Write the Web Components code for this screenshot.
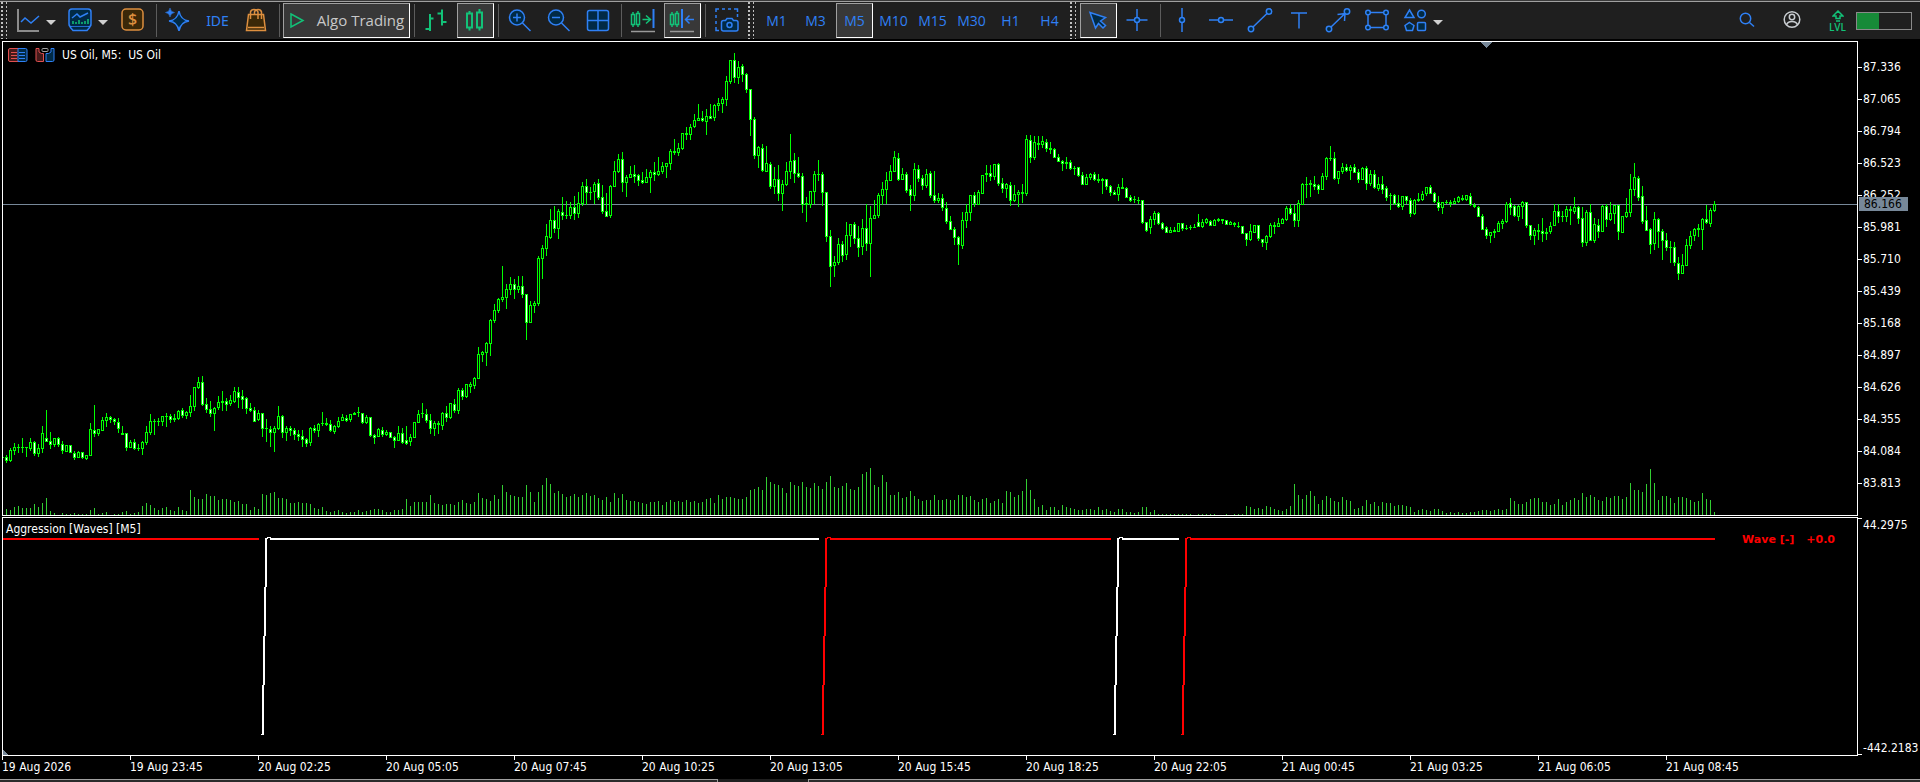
<!DOCTYPE html>
<html lang="en">
<head>
<meta charset="utf-8">
<title>US Oil, M5</title>
<style>
    html, body {
        height: 100%;
        margin: 0;
    }

    body {
        background: #000;
        color: #fff;
        font-family: "DejaVu Sans Condensed", "DejaVu Sans", sans-serif;
        font-size: 12px;
        overflow: hidden;
    }
</style>
</head>
<body>
<trading-terminal></trading-terminal>

<script>
(function (){
    const BLUE = "#2f80f5";
    const GREEN = "#12c278";
    const ORANGE = "#dd8f3f";
    const NAVY = "#012a45";

    // All icons are drawn in a 24x24 box
    const icons = {
        line: `<path d="M2 1V23H23" stroke="#8c8c8c" stroke-width="2"/><path d="M5 14L9 10L15 15L23 8"/>`,
        indicators: `<rect x="1" y="1" width="22" height="18" rx="3" fill="${NAVY}"/><path d="M2 19L5 22.500H19L22 19" fill="${NAVY}"/><path d="M4 10L9 6L12 9L20 5"/><path d="M5 13V16M8 14V16M11 12V16M14 14V16M17 13V16M20 11V16" stroke="${GREEN}"/>`,
        dollar: `<rect x="1" y="1" width="21" height="21" rx="4" fill="#3b2808" stroke="${ORANGE}"/><text x="11.500" y="17" fill="${ORANGE}" stroke="none" font-family="Open Sans" font-size="16" font-weight="600" text-anchor="middle">$</text>`,
        sparkle: `<path d="M13 3Q14.500 12 23 13Q14.500 14 13 23Q11.500 14 3 13Q11.500 12 13 3Z" fill="${NAVY}"/><path d="M4 0Q4.500 4 8.500 4.500Q4.500 5 4 9Q3.500 5 -.5 4.500Q3.500 4 4 0Z" fill="${BLUE}" stroke-width=".5"/>`,
        bag: `<path d="M4.500 6.500H19.500L21.500 22.500H2.500Z" fill="#3b2808" stroke="${ORANGE}"/><path d="M6.500 11V4Q7 1.500 10 1.500Q13 1.500 14 4V11M10.500 6V4Q11 1.500 14 1.500Q17 1.500 17.500 4V11M4 19.500H20" stroke="${ORANGE}"/>`,
        play: `<path d="M6 6L18 12.500L6 19Z" stroke="${GREEN}"/>`,
        bars: `<path d="M6 6V23M1.500 21H6M6 10.500H9.500M18 1.500V17.500M13.500 5.500H18M18 14H22.500" stroke="${GREEN}" stroke-width="2"/>`,
        candles: `<path d="M4 5.500H9V19.500H4ZM6.500 3V5.500M6.500 19.500V22.500M14 4.500H19V19.500H14ZM16.500 1V4.500M16.500 19.500V22.500" stroke="${GREEN}" stroke-width="2"/>`,
        zoomIn: `<circle cx="9" cy="9.500" r="7.500" fill="${NAVY}"/><path d="M14.500 15L22.500 23M9 5.500V13.500M5 9.500H13"/>`,
        zoomOut: `<circle cx="9" cy="9.500" r="7.500" fill="${NAVY}"/><path d="M14.500 15L22.500 23M5 9.500H13"/>`,
        grid: `<rect x="1.500" y="2.500" width="21" height="20" rx="2" fill="${NAVY}"/><path d="M12 2.500V22.500M1.500 12.500H22.500"/>`,
        scroll: `<path d="M.5 6.500H3.500V16.500H.5ZM2 4V6.500M2 16.500V19M5.500 5.500H8.500V16.500H5.500ZM7 3V5.500M7 16.500V19M11.500 11.500H19M15 7.500L19.500 11.500L15 15.500" stroke="${GREEN}"/><path d="M22.500 1V20" stroke-width="2"/><path d="M0 23.500H24" stroke="#9a9a9a"/>`,
        shift: `<path d="M.5 6.500H3.500V16.500H.5ZM2 4V6.500M2 16.500V19M5.500 5.500H8.500V16.500H5.500ZM7 3V5.500M7 16.500V19" stroke="${GREEN}"/><path d="M12 1V20" stroke-width="2"/><path d="M24 11.500H16M19.500 7.500L15.500 11.500L19.500 15.500"/><path d="M0 23.500H24" stroke="#9a9a9a"/>`,
        camera: `<path d="M1 4V1H4M7 1H10M13 1H16M19 1H22.500V4M22.500 6V9M1 7V10M1 13V16M1 19V22.500H4"/><path d="M6.500 14.500Q6.500 12.500 8.500 12.500H10.500L12 10.500H17L18.500 12.500H21Q23 12.500 23 14.500V21Q23 23 21 23H8.500Q6.500 23 6.500 21Z" fill="${NAVY}"/><circle cx="14.500" cy="17" r="2.500"/>`,
        cursor: `<path d="M4 4.500L19.500 9.500L14.500 13L19.500 17.500L17 20L12.500 15.500L9.500 20Z" fill="${NAVY}"/>`,
        crosshair: `<path d="M12 1V23M1.500 12H22.500"/><circle cx="12" cy="12" r="2.500" fill="${NAVY}"/>`,
        vline: `<path d="M12 0V24"/><circle cx="12" cy="12" r="2.500" fill="${NAVY}"/>`,
        hline: `<path d="M0 12H24"/><circle cx="12" cy="12" r="2.500" fill="${NAVY}"/>`,
        trend: `<path d="M5 19L19 5.500"/><circle cx="3" cy="21" r="2.700" fill="${NAVY}"/><circle cx="21" cy="3.500" r="2.700" fill="${NAVY}"/>`,
        text: `<path d="M4 5H20M12 5V20.500"/>`,
        arrow: `<path d="M5 19L19 5.500M11.500 6.500L19 5.500L18.500 13"/><circle cx="3" cy="21" r="2.700" fill="${NAVY}"/><circle cx="21" cy="3.500" r="2.700" fill="${NAVY}"/>`,
        rect: `<rect x="3" y="4.500" width="18" height="15"/><g fill="${NAVY}"><circle cx="3" cy="4.500" r="2.300"/><circle cx="21" cy="4.500" r="2.300"/><circle cx="3" cy="19.500" r="2.300"/><circle cx="21" cy="19.500" r="2.300"/></g>`,
        shapes: `<g fill="${NAVY}"><path d="M6.500 2L11 9.500H2Z"/><circle cx="18.500" cy="6" r="3.800"/><path d="M6.500 14.500L11 17.500L9.500 22.500H3.500L2 17.500Z"/><rect x="14.500" y="14.500" width="8" height="8" rx="1"/></g>`,
        search: `<circle cx="10.500" cy="10.500" r="5.200"/><path d="M14.500 14.500L19 18.500"/>`,
        user: `<g stroke="#c8ccd0"><circle cx="12" cy="11.500" r="7.800"/><circle cx="12" cy="9" r="2.700"/><path d="M6.500 17Q7.500 13.500 12 13.500Q16.500 13.500 17.500 17"/></g>`,
    };

    const svgIcon = name => `<svg viewBox="0 0 24 24" width="24" height="24" fill="none" stroke="${BLUE}" stroke-width="1.500" overflow="visible" aria-hidden="true">${icons[name]}</svg>`;

    class ToolButton extends HTMLElement {
        constructor() {
            super();
            this.attachShadow({ mode: "open" });
        }

        connectedCallback() {
            const icon = this.getAttribute("icon");
            this.shadowRoot.innerHTML = `
            <style>
            :host {
                display: flex;
                flex: none;
                width: 37px;
            }

            :host([wide]) {
                width: 127px;
            }

            :host([split]) {
                width: 50px;
            }

            button {
                align-items: center;
                background: none;
                border: 1px solid transparent;
                box-sizing: border-box;
                color: ${BLUE};
                display: flex;
                font: 14px "Open Sans", sans-serif;
                height: 35px;
                justify-content: center;
                padding: 0;
                width: 100%;
            }

            :host([icon]) button {
                padding: 0 1px 1px 0;
            }

            :host([active]) button {
                background: #383838;
                border-color: #a0a0a0 #fff #fff #a0a0a0;
            }

            :host([wide]) button {
                color: #c8c8c8;
                font-size: 15px;
                gap: 8px;
                padding-right: 4px;
            }

            :host([split]) button {
                gap: 6px;
                justify-content: flex-start;
                padding-left: 4px;
            }

            :host([mono]) button {
                font-family: "Noto Sans", sans-serif;
            }

            .caret {
                border: 5px solid transparent;
                border-bottom: 0;
                border-top-color: #d0d0d0;
                margin-top: 4px;
            }

            svg {
                flex: none;
            }
            </style>
            <button type="button" aria-label="${this.getAttribute("label") || this.textContent}">
                ${icon ? svgIcon(icon) : ""}<slot></slot>
                ${this.hasAttribute("split") ? `<span class="caret"></span>` : ""}
            </button>`;
        }
    }

    class ToolGrip extends HTMLElement {
        constructor() {
            super();
            this.attachShadow({ mode: "open" }).innerHTML = `
            <style>
            :host {
                align-self: stretch;
                background:
                    repeating-linear-gradient(#c0c0c0 0 2px, transparent 2px 4px) 0 0 / 2px 100% no-repeat,
                    repeating-linear-gradient(#c0c0c0 0 2px, transparent 2px 4px) 5px 0 / 1px 100% no-repeat;
                display: block;
                flex: none;
                width: 8px;
            }
            </style>`;
        }
    }

    class ToolSeparator extends HTMLElement {
        constructor() {
            super();
            this.attachShadow({ mode: "open" }).innerHTML = `
            <style>
            :host {
                background: linear-gradient(#5c5c5c, #5c5c5c) 2px 0 / 1px 100% no-repeat;
                display: block;
                flex: none;
                height: 33px;
                width: 4px;
            }
            </style>`;
        }
    }

    class TerminalToolbar extends HTMLElement {
        constructor() {
            super();
            this.attachShadow({ mode: "open" }).innerHTML = `
            <style>
            :host {
                align-items: center;
                background: #1f1f1f;
                border-top: 1px solid #a0a0a0;
                box-shadow: 0 -1px #3a3a3a;
                display: flex;
                gap: 2px;
                height: 37px;
                margin-top: 1px;
                padding: 0 8px 0 1px;
            }

            .status {
                align-items: center;
                display: flex;
                gap: 8px;
                margin-left: auto;
            }

            .level {
                align-items: center;
                color: ${GREEN};
                display: flex;
                flex-direction: column;
                font: 600 10px/10px "Open Sans", sans-serif;
                width: 37px;
            }

            .load {
                border: 1px solid #8a8a8a;
                box-sizing: border-box;
                height: 18px;
                margin-left: -2px;
                width: 56px;
            }

            .load span {
                background: #178a38;
                display: block;
                height: 100%;
                width: 40%;
            }
            </style>
            <tool-grip></tool-grip>
            <tool-button icon="line" label="New chart" split></tool-button>
            <tool-button icon="indicators" label="Indicators" split></tool-button>
            <tool-button icon="dollar" label="Deposit"></tool-button>
            <tool-separator></tool-separator>
            <tool-button icon="sparkle" label="Assistant"></tool-button>
            <tool-button mono>IDE</tool-button>
            <tool-button icon="bag" label="Market"></tool-button>
            <tool-separator></tool-separator>
            <tool-button icon="play" wide active>Algo Trading</tool-button>
            <tool-separator></tool-separator>
            <tool-button icon="bars" label="Bar chart"></tool-button>
            <tool-button icon="candles" label="Candlesticks" active></tool-button>
            <tool-separator></tool-separator>
            <tool-button icon="zoomIn" label="Zoom in"></tool-button>
            <tool-button icon="zoomOut" label="Zoom out"></tool-button>
            <tool-button icon="grid" label="Tile windows"></tool-button>
            <tool-separator></tool-separator>
            <tool-button icon="scroll" label="Auto scroll"></tool-button>
            <tool-button icon="shift" label="Chart shift" active></tool-button>
            <tool-separator></tool-separator>
            <tool-button icon="camera" label="Screenshot"></tool-button>
            <tool-grip></tool-grip>
            <tool-button>M1</tool-button>
            <tool-button>M3</tool-button>
            <tool-button active>M5</tool-button>
            <tool-button>M10</tool-button>
            <tool-button>M15</tool-button>
            <tool-button>M30</tool-button>
            <tool-button>H1</tool-button>
            <tool-button>H4</tool-button>
            <tool-grip></tool-grip>
            <tool-button icon="cursor" label="Cursor" active></tool-button>
            <tool-button icon="crosshair" label="Crosshair"></tool-button>
            <tool-separator></tool-separator>
            <tool-button icon="vline" label="Vertical line"></tool-button>
            <tool-button icon="hline" label="Horizontal line"></tool-button>
            <tool-button icon="trend" label="Trendline"></tool-button>
            <tool-button icon="text" label="Text"></tool-button>
            <tool-button icon="arrow" label="Arrowed line"></tool-button>
            <tool-button icon="rect" label="Rectangle"></tool-button>
            <tool-button icon="shapes" label="Objects" split></tool-button>
            <div class="status">
                <tool-button icon="search" label="Search"></tool-button>
                <tool-button icon="user" label="Account"></tool-button>
                <div class="level">
                    <svg width="12" height="12" viewBox="0 0 12 12" fill="none" stroke="${GREEN}" stroke-width="1.500" aria-hidden="true"><path d="M6 1L11 6H8V8.500H4V6H1ZM4 11H8"/></svg>
                    <span>LVL</span>
                </div>
            </div>
            <div class="load"><span></span></div>`;
        }
    }

    // Candles, 4px apart: direction, then high, body top, body bottom, low
    const candles = `
    d455,457,460,462 u448,450,460,461 u443,447,450,454 u444,447,447,452 u438,447,447,452 u447,447,447,456 u438,442,448,450 d441,442,453,455 u444,448,453,456 u426,433,448,452
    d410,438,441,441 d432,441,444,448 u438,438,444,446 d437,438,444,446 d441,444,450,453 u445,445,451,451 d445,445,452,452 d451,453,457,459 u451,452,457,457 d452,452,457,458
    u455,455,458,459 u423,429,455,455 d405,430,433,436 u429,429,433,435 u417,420,430,430 u413,417,420,426 d416,417,419,422 d418,419,421,424 d418,422,428,432 d426,433,434,434
    d433,433,447,450 u440,442,447,447 d439,442,448,449 u444,448,448,450 u441,442,448,454 u426,432,442,444 u414,421,432,434 u419,421,421,434 u418,421,421,425 u416,416,421,425
    u413,416,416,426 d414,416,419,422 d414,418,419,421 u410,411,418,419 d408,410,415,417 u411,412,415,418 u395,406,412,416 u387,387,406,410 u377,382,387,388 d376,382,404,405
    d398,404,409,412 d401,409,413,416 u407,408,413,430 u396,402,407,409 u391,401,402,410 d398,401,404,410 u395,400,403,405 u387,391,401,402 d387,392,397,407 d390,396,399,408
    d397,398,408,413 d403,408,410,411 d407,410,421,421 u410,413,419,420 d413,413,428,436 u419,428,428,441 d426,429,432,446 u426,428,432,451 u406,416,428,429 d415,416,432,437
    u426,428,432,440 d426,428,430,435 d428,430,434,439 d430,434,436,440 d430,436,439,446 d438,439,443,446 u427,428,442,445 d425,428,430,432 u423,424,430,436 u412,423,423,425
    u418,423,424,425 d420,424,430,431 u425,426,431,433 u417,421,426,427 u414,417,420,420 d415,418,420,421 u414,414,419,421 u412,413,414,414 u407,412,412,416 d413,413,422,423
    u415,417,422,423 d417,417,435,436 d434,435,437,443 u428,429,436,436 d427,430,434,436 u430,432,434,435 d432,432,437,437 d436,437,440,447 u426,433,440,440 d428,433,442,443
    d426,440,443,444 u434,437,441,445 u422,422,437,437 u410,414,422,422 u403,413,413,417 d409,414,420,422 d414,420,428,433 u421,423,428,435 u421,423,424,433 u412,413,425,429
    d406,413,417,421 u403,403,417,418 d399,404,410,412 u388,390,410,413 d388,390,396,399 u384,384,396,397 u382,384,386,392 u377,378,385,388 u347,354,378,378 u351,352,354,361
    u342,343,352,365 u319,320,343,355 u304,310,320,322 u298,299,310,312 u266,297,299,301 u284,289,297,308 u277,284,289,294 d279,284,289,298 u276,286,289,292 d276,286,294,297
    d294,294,322,339 u301,305,322,322 u301,303,305,312 u256,258,303,305 u245,248,258,278 u224,236,248,255 u209,220,237,238 d206,220,228,232 u209,211,228,238 d197,212,215,219
    u201,215,215,218 u202,207,215,218 d196,207,213,219 u192,203,213,217 u182,186,203,205 d179,186,192,204 u187,192,192,199 u182,184,191,203 d179,183,197,199 d185,197,211,213
    d193,211,216,216 u185,186,215,217 u161,171,186,186 u154,159,171,172 d152,159,182,191 u175,177,182,196 u166,174,177,177 d165,174,176,182 d174,175,180,185 d172,180,182,183
    u169,177,182,182 u170,172,177,192 d162,172,174,180 u157,171,174,175 u162,166,171,173 u163,163,166,177 u149,151,163,169 u139,151,152,154 u143,148,152,155 u133,133,148,149
    u127,133,134,139 u124,127,134,139 u114,120,126,127 u104,118,120,120 d111,118,120,121 u109,116,121,134 d104,116,118,118 u104,105,117,120 u98,103,105,110 u97,99,103,112
    u76,81,99,105 u60,60,81,83 d53,60,77,82 u61,67,77,83 d64,66,74,81 d73,74,89,92 d89,89,119,135 d117,119,155,158 u146,147,155,167 d144,148,170,171
    u146,163,171,171 d162,164,186,188 u167,179,186,193 d165,179,193,200 u180,184,193,210 u162,171,184,185 u134,161,171,178 d153,160,173,182 d157,173,176,177 d173,176,204,212
    u197,203,204,221 u191,191,204,207 u171,174,191,203 u160,174,174,180 d172,174,192,205 d192,192,236,241 d230,236,266,286 u256,262,265,276 u238,244,262,264 d241,244,255,261
    u222,235,254,259 u224,224,235,246 d222,224,238,243 d226,238,247,256 u219,228,246,254 d204,228,243,250 u206,218,243,276 u200,215,218,218 u193,195,215,217 u182,189,195,204
    u172,180,189,203 u165,171,180,180 u151,157,171,171 d153,158,179,180 u168,174,179,179 d172,174,190,192 d185,189,195,210 u163,169,195,200 d165,169,178,181 d175,178,185,189
    u169,174,185,187 d171,173,195,197 d171,195,200,202 u193,198,200,202 d194,198,207,210 d202,208,221,223 d216,221,229,229 d227,229,237,244 d236,237,244,264 u212,220,245,248
    u204,212,220,227 u195,195,212,220 d192,195,203,206 u190,192,204,204 u175,175,193,193 u165,173,174,181 d165,173,176,180 u164,164,176,179 d163,164,183,185 d178,183,188,192
    u183,184,188,197 d182,185,200,205 u185,194,200,201 u190,192,194,206 u184,192,193,202 u135,139,193,195 d135,140,157,162 u136,142,157,159 u136,143,144,149 u136,141,144,147
    d139,142,148,151 u142,148,149,153 d148,149,157,157 d154,157,161,161 d160,161,163,170 u157,162,163,168 d160,162,168,169 u166,168,168,174 d167,167,175,176 d172,175,184,184
    u174,177,184,184 u173,174,177,179 d172,174,179,180 u174,179,180,182 u178,179,180,193 d179,179,186,189 d185,186,192,195 d190,192,194,194 u184,187,194,200 u178,187,188,188
    d187,188,197,197 d195,197,200,201 u196,199,199,202 u197,200,200,203 d200,200,222,223 d222,222,230,231 u216,219,227,233 u211,213,219,224 d212,213,223,224 d222,223,228,229
    d226,227,232,232 u227,230,232,232 u227,230,231,231 u223,223,231,231 d223,223,228,230 u225,228,228,229 u225,227,227,229 u224,227,227,227 d214,222,226,226 u219,222,226,227
    u218,219,222,223 d220,221,225,225 u219,220,225,225 u218,219,220,221 u219,219,220,223 d220,220,224,224 u221,222,224,224 u222,223,224,226 u222,226,226,227 d226,226,233,233
    d233,233,239,245 u224,231,239,240 u225,225,232,232 d225,225,238,240 d239,239,242,246 u235,236,242,249 u223,225,236,237 u222,225,226,233 u218,223,226,226 u218,219,223,223
    u206,208,219,220 d204,208,213,214 d205,213,220,226 u200,203,220,226 u183,184,204,204 u177,184,184,197 u180,183,184,196 d176,184,186,189 d184,185,189,193 u173,176,189,189
    u157,158,176,179 u146,158,158,160 d152,158,178,179 u171,171,178,183 u163,167,171,173 d164,167,170,171 u165,167,170,179 d164,167,172,172 d169,172,179,182 u167,168,179,179
    d166,168,183,189 u170,174,183,185 d170,174,187,188 u177,184,188,190 d176,184,189,193 d186,188,197,200 u193,195,195,209 d194,195,203,204 d195,203,206,207 u196,196,206,209
    d196,196,200,203 d198,200,213,216 u199,200,213,214 u193,199,200,201 u191,194,199,200 u187,187,193,195 d185,187,193,193 d192,193,201,202 d196,202,207,210 u202,202,207,213
    u200,202,202,203 u200,202,203,206 u198,201,203,203 u196,197,201,202 u195,198,199,200 u195,195,199,200 d193,196,204,205 u203,205,206,207 d206,207,216,216 d214,216,229,229
    d227,229,235,238 u232,232,235,242 u229,231,232,237 u221,223,231,231 u219,221,223,228 u202,204,221,222 d198,203,207,214 d205,206,215,216 u205,206,216,220 u201,202,206,218
    d202,202,225,227 d225,225,235,239 u228,230,235,244 u224,230,231,239 d218,231,233,241 u228,232,233,239 u222,226,231,233 u204,211,225,225 d204,211,216,222 u211,216,216,221
    u206,209,216,221 u206,209,210,224 u197,207,211,213 d206,207,218,223 d207,218,242,246 u210,212,242,245 d204,212,240,240 u218,224,240,242 d219,225,231,237 u205,206,231,231
    d204,206,219,226 u202,213,219,220 u205,205,213,223 d205,205,231,239 u216,216,232,232 u198,212,216,217 u174,189,212,216 u163,177,189,195 d176,178,197,200 d186,196,221,223
    d206,220,230,230 d228,229,244,253 u212,219,243,249 d218,219,231,247 d229,231,240,259 d233,240,247,250 u241,247,247,262 d242,247,262,265 d257,263,273,279 u254,265,273,273
    u239,245,265,265 u231,236,245,248 u228,229,235,240 u224,228,229,236 u218,219,229,249 d205,219,222,223 u208,210,223,226 u201,204,210,211`;

    const volumes = [
        6,5,8,9,7,7,7,11,8,12,17,4,2,0,2,1,1,2,1,1,1,5,7,1,2,3,0,1,1,3,4,1,2,3,9,12,10,7,5,7,8,5,4,8,5,4,25,18,16,16,
        21,19,19,15,16,16,15,13,14,11,11,5,8,6,21,20,22,23,17,17,16,12,12,13,12,12,11,7,6,8,4,3,4,5,3,2,3,3,5,3,4,5,6,6,5,3,3,5,5,6,
        16,9,13,13,13,13,20,12,11,10,11,11,10,13,15,12,11,13,22,17,16,14,20,16,30,23,20,19,18,18,30,23,13,23,30,37,31,22,24,21,18,19,21,18,20,22,19,20,17,15,
        18,13,22,17,21,15,14,14,13,12,11,13,13,14,10,13,15,13,14,13,15,13,14,12,13,16,17,12,20,16,18,18,17,16,16,18,25,26,28,25,38,33,31,30,27,22,33,30,29,33,
        28,27,32,29,26,33,39,28,27,29,32,26,25,28,41,43,47,30,28,40,33,20,20,23,17,18,24,19,16,14,15,15,20,15,15,16,15,15,20,20,18,19,15,13,16,17,12,14,16,12,
        24,23,18,20,24,36,25,16,8,10,5,8,8,5,10,8,7,6,5,5,6,6,5,8,5,6,4,3,6,6,3,3,2,3,8,8,3,5,1,1,1,1,1,1,1,1,1,0,1,1,
        1,1,1,0,0,1,0,1,1,1,9,8,6,7,6,9,8,6,5,4,6,9,31,20,16,20,24,19,11,15,19,17,14,13,18,15,14,6,7,9,15,11,13,9,13,12,12,9,10,10,
        9,8,3,5,6,5,4,6,6,4,2,3,2,3,2,2,3,3,4,5,5,4,5,6,5,6,17,14,11,11,13,16,17,17,13,13,10,11,16,10,13,15,17,15,22,18,20,18,15,14,
        18,17,19,19,16,18,32,25,25,23,31,46,32,15,19,19,17,12,18,18,17,15,13,14,22,16,15,3
    ];

    // Scale labels with a tick in front of each
    class PriceScale extends HTMLElement {
        constructor() {
            super();
            this.attachShadow({ mode: "open" });
        }

        connectedCallback() {
            const labels = this.getAttribute("values").split(" ");
            this.shadowRoot.innerHTML = `
            <style>
            :host {
                display: block;
                flex: none;
                position: relative;
                width: 62px;
            }

            ol {
                box-sizing: border-box;
                display: flex;
                flex-direction: column;
                height: 100%;
                list-style: none;
                margin: 0;
                padding: 10px 0 0;
            }

            li {
                align-items: center;
                display: flex;
                gap: 1px;
                height: 32px;
                white-space: nowrap;
            }

            li::before {
                background: #fff;
                content: "";
                flex: none;
                height: 1px;
                width: 4px;
            }

            :host([ends]) ol {
                justify-content: space-between;
                padding: 1px 0;
            }

            :host([ends]) li {
                align-items: flex-start;
                height: 14px;
                line-height: 14px;
            }

            :host([ends]) li:last-child {
                align-items: flex-end;
            }

            mark {
                background: #778899;
                box-sizing: border-box;
                color: #000;
                left: 1px;
                line-height: 14px;
                padding-left: 5px;
                position: absolute;
                top: 156px;
                width: 49px;
            }
            </style>
            <ol>${labels.map(label => `<li>${label}</li>`).join("")}</ol>
            ${this.hasAttribute("price") ? `<mark>${this.getAttribute("price")}</mark>` : ""}`;
        }
    }

    class ChartPane extends HTMLElement {
        constructor() {
            super();
            this.attachShadow({ mode: "open" }).innerHTML = `
            <style>
            :host {
                display: flex;
                min-height: 0;
            }

            .frame {
                border: 1px solid #fff;
                box-sizing: border-box;
                flex: 1;
                min-width: 0;
                overflow: hidden;
                position: relative;
            }
            </style>
            <div class="frame"><slot></slot></div>
            <slot name="scale"></slot>`;
        }
    }

    class CandleChart extends HTMLElement {
        constructor() {
            super();
            this.attachShadow({ mode: "open" });

            let outline = "M2 457h2v1h-2z";
            let rising = "";
            let falling = "";
            candles.trim().split(/\s+/).forEach((item, i) => {
                const [high, top, bottom, low] = item.slice(1).split(",").map(Number);
                const x = 6 + i * 4;
                outline += `M${x} ${high}h1V${low + 1}h-1zM${x - 1} ${top}h3V${bottom + 1}h-3z`;
                if(bottom - top > 1) {
                    const body = `M${x} ${top + 1}h1V${bottom}h-1z`;
                    if(item[0] === "u") rising += body;
                    else falling += body;
                }
            });
            const bars = volumes.map((v, i) => `M${6 + i * 4} 515h1v${-v}h-1z`).join("");

            this.shadowRoot.innerHTML = `
            <style>
            :host {
                display: block;
                height: 100%;
            }

            svg {
                display: block;
                height: 100%;
                width: 100%;
            }

            header {
                align-items: center;
                display: flex;
                gap: 7px;
                left: 5px;
                position: absolute;
                top: 5px;
                white-space: pre;
            }

            header svg {
                height: 16px;
                width: 20px;
            }

            header span {
                line-height: 16px;
            }
            </style>
            <svg shape-rendering="crispEdges" role="img" aria-label="Price chart">
                <g transform="translate(-3 -42)">
                    <path d="M0 204H4000V205H0Z" fill="#778899"/>
                    <path d="${bars}" fill="#32cd32"/>
                    <path d="${outline}" fill="#00ff00" fill-rule="nonzero"/>
                    <path d="${rising}" fill="#000"/>
                    <path d="${falling}" fill="#fff"/>
                    <path d="M1481 42H1492L1486 48Z" fill="#778899"/>
                </g>
            </svg>
            <header>
                <svg viewBox="0 0 20 16" fill="none" aria-hidden="true">
                    <path d="M10 1.500H2Q.5 1.500 .5 3V13Q.5 14.500 2 14.500H10" fill="#451a1a" stroke="#e05050"/>
                    <path d="M10 1.500H17.500Q19 1.500 19 3V13Q19 14.500 17.500 14.500H10Z" fill="${NAVY}" stroke="${BLUE}"/>
                    <path d="M3 5.500H9M3 8.500H9M3 11.500H9" stroke="#e05050"/>
                    <path d="M11 5.500H17M11 8.500H17M11 11.500H17" stroke="${BLUE}"/>
                </svg>
                <svg viewBox="0 0 20 16" fill="none" aria-hidden="true">
                    <path d="M1 1.500H4V5L6.500 6.500H8.500V14.500H2.500Q1 14.500 1 13Z" fill="#451a1a" stroke="#e05050"/>
                    <path d="M19 1.500H16V5L13.500 6.500H11V14.500H17.500Q19 14.500 19 13Z" fill="${NAVY}" stroke="${BLUE}"/>
                    <rect x="7" y="1.500" width="6" height="3" rx="1" stroke="#a0a0a0"/>
                </svg>
                <span>US Oil, M5:  US Oil</span>
            </header>`;
        }
    }

    class WaveChart extends HTMLElement {
        constructor() {
            super();
            this.attachShadow({ mode: "open" });

            // A wave climbs in four 1px steps, then runs flat to its end
            const wave = (x, end, color) => `<path fill="${color}" d="
                M${x - 5} 734h2v1h-2zM${x - 4} 685h2v50h-2zM${x - 3} 636h2v49h-2zM${x - 2} 587h2v49h-2zM${x - 1} 538h2v49h-2z
                M${x + 1} 537h4v1h-4zM${x} 538h2v1h-2zM${x + 4} 538H${end}v2H${x + 4}z"/>`;

            this.shadowRoot.innerHTML = `
            <style>
            :host {
                display: block;
                height: 100%;
            }

            svg {
                display: block;
                height: 100%;
                width: 100%;
            }

            .title, .value {
                line-height: 14px;
                position: absolute;
            }

            .title {
                left: 3px;
                top: 4px;
            }

            .value {
                color: #f00;
                display: flex;
                font: bold 11px/14px "DejaVu Sans", sans-serif;
                gap: 12px;
                right: 22px;
                top: 15px;
            }
            </style>
            <svg shape-rendering="crispEdges" role="img" aria-label="Aggression waves">
                <g transform="translate(-3 -518)">
                    <path d="M3 538H259v2H3z" fill="#f00"/>
                    ${wave(266, 819, "#fff")}
                    ${wave(826, 1111, "#f00")}
                    ${wave(1118, 1179, "#fff")}
                    ${wave(1186, 1715, "#f00")}
                    <path d="M3 750L8 755H3Z" fill="#778899"/>
                </g>
            </svg>
            <span class="title">Aggression [Waves] [M5]</span>
            <div class="value"><span>Wave [-]</span><span>+0.0</span></div>`;
        }
    }

    class TimeScale extends HTMLElement {
        constructor() {
            super();
            this.attachShadow({ mode: "open" });
        }

        connectedCallback() {
            const labels = this.getAttribute("values").split(",");
            this.shadowRoot.innerHTML = `
            <style>
            :host {
                display: block;
                overflow: hidden;
            }

            ol {
                display: flex;
                list-style: none;
                margin: 0;
                padding: 0;
            }

            li {
                flex: none;
                line-height: 14px;
                width: 128px;
            }

            li::before {
                background: #fff;
                content: "";
                display: block;
                height: 4px;
                width: 1px;
            }
            </style>
            <ol>${labels.map(label => `<li>${label}</li>`).join("")}</ol>`;
        }
    }

    class TradingTerminal extends HTMLElement {
        constructor() {
            super();
            this.attachShadow({ mode: "open" }).innerHTML = `
            <style>
            :host {
                display: flex;
                flex-direction: column;
                height: 100vh;
            }

            main {
                display: flex;
                flex: 1;
                flex-direction: column;
                gap: 1px;
                min-height: 0;
                padding: 2px 0 0 2px;
            }

            .price {
                flex: 1;
            }

            .wave {
                flex: none;
                height: 239px;
            }

            time-scale {
                height: 23px;
                margin-top: -1px;
            }

            footer {
                background: #1f1f1f;
                display: flex;
                height: 3px;
                justify-content: space-between;
            }

            footer span {
                background: #2b2b2b;
                border-top: 1px solid #a0a0a0;
            }

            footer span:first-child {
                border-right: 1px solid #a0a0a0;
                width: 717px;
            }

            footer span:last-child {
                border-left: 1px solid #a0a0a0;
                flex: 1;
                margin-left: 90px;
            }
            </style>
            <terminal-toolbar></terminal-toolbar>
            <main>
                <chart-pane class="price">
                    <candle-chart></candle-chart>
                    <price-scale slot="scale" price="86.166" values="87.336 87.065 86.794 86.523 86.252 85.981 85.710 85.439 85.168 84.897 84.626 84.355 84.084 83.813"></price-scale>
                </chart-pane>
                <chart-pane class="wave">
                    <wave-chart></wave-chart>
                    <price-scale slot="scale" ends values="44.2975 -442.2183"></price-scale>
                </chart-pane>
                <time-scale values="19 Aug 2026,19 Aug 23:45,20 Aug 02:25,20 Aug 05:05,20 Aug 07:45,20 Aug 10:25,20 Aug 13:05,20 Aug 15:45,20 Aug 18:25,20 Aug 22:05,21 Aug 00:45,21 Aug 03:25,21 Aug 06:05,21 Aug 08:45"></time-scale>
            </main>
            <footer><span></span><span></span></footer>`;
        }
    }

    customElements.define("tool-button", ToolButton);
    customElements.define("tool-grip", ToolGrip);
    customElements.define("tool-separator", ToolSeparator);
    customElements.define("terminal-toolbar", TerminalToolbar);
    customElements.define("price-scale", PriceScale);
    customElements.define("chart-pane", ChartPane);
    customElements.define("candle-chart", CandleChart);
    customElements.define("wave-chart", WaveChart);
    customElements.define("time-scale", TimeScale);
    customElements.define("trading-terminal", TradingTerminal);
})();
</script>
</body>
</html>
